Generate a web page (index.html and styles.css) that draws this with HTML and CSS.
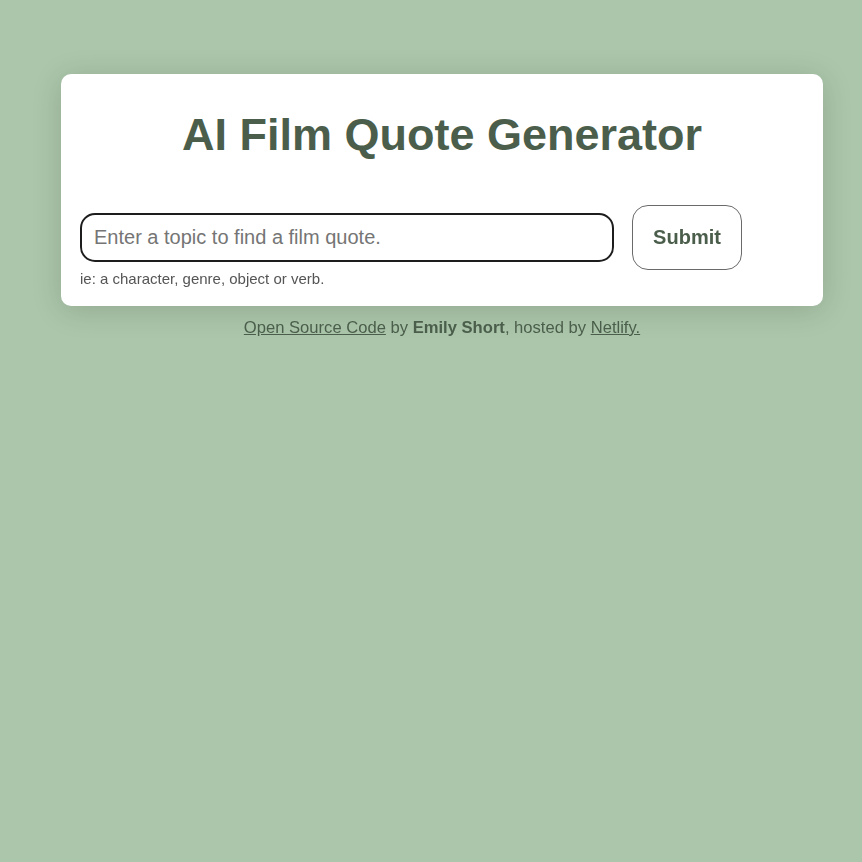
FILE: index.html
```html
<!DOCTYPE html>
<html>
<head>
<meta charset="utf-8">
<link rel="stylesheet" href="styles.css">
</head>
<body>
<div class="container">
  <div class="card">
    <h1 class="title">AI Film Quote Generator</h1>
    <form class="form">
      <div class="row">
        <input class="topic" type="text" placeholder="Enter a topic to find a film quote." autofocus>
        <button class="submit" type="button">Submit</button>
      </div>
      <div class="hint">ie: a character, genre, object or verb.</div>
    </form>
  </div>
  <footer class="footer">
    <a href="#">Open Source Code</a> by <strong>Emily Short</strong>, hosted by <a href="#">Netlify.</a>
  </footer>
</div>
</body>
</html>
```

FILE: styles.css
```css
html, body {
  margin: 0;
  padding: 0;
  background: #abc6aa;
  font-family: "Liberation Sans", Arial, sans-serif;
  color: #4b5e4b;
}
.container {
  width: 762px;
  margin: 74px 0 0 61px;
}
.card {
  background: #fff;
  border-radius: 10px;
  box-shadow: 0 4px 30px rgba(0, 0, 0, 0.15);
  padding: 20px 19px 19px;
}
.title {
  margin: 13px 0 0;
  text-align: center;
  font-size: 45px;
  font-weight: bold;
  line-height: 55px;
  color: #4b5e4b;
}
.form {
  margin-top: 43px;
}
.row {
  display: flex;
  align-items: center;
  gap: 18px;
}
.topic {
  width: 534px;
  height: 49px;
  box-sizing: border-box;
  border: 2px solid #1d1d1d;
  border-radius: 15px;
  padding: 0 12px;
  font-family: "Liberation Sans", Arial, sans-serif;
  font-size: 20px;
  outline: none;
  color: #333;
}
.topic::placeholder {
  color: #757575;
}
.submit {
  width: 110px;
  height: 65px;
  box-sizing: border-box;
  background: #fff;
  border: 1px solid #6a6a6a;
  border-radius: 16px;
  font-family: "Liberation Sans", Arial, sans-serif;
  font-size: 20px;
  font-weight: bold;
  color: #4b5e4b;
}
.hint {
  margin-top: 0;
  font-size: 15px;
  color: #555;
}
.footer {
  margin-top: 12px;
  text-align: center;
  font-size: 16.6px;
  color: #4b5e4b;
}
.footer a {
  color: #4b5e4b;
}
```
